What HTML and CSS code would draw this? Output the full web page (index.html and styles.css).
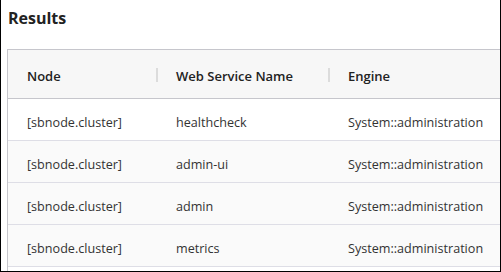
FILE: index.html
```html
<!DOCTYPE html>
<html lang="en">
<head>
    <meta charset="UTF-8">
    <meta name="viewport" content="width=device-width, initial-scale=1.0">
    <title>Results</title>
    <link rel="stylesheet" href="styles.css">
</head>
<body>
    <div class="panel">
        <h2 class="panel-title">Results</h2>

        <div class="results-table">
            <div class="row head">
                <div class="cell">Node</div>
                <div class="cell">Web Service Name</div>
                <div class="cell">Engine</div>
            </div>
            <div class="row first">
                <div class="cell">[sbnode.cluster]</div>
                <div class="cell">healthcheck</div>
                <div class="cell">System::administration</div>
            </div>
            <div class="row">
                <div class="cell">[sbnode.cluster]</div>
                <div class="cell">admin-ui</div>
                <div class="cell">System::administration</div>
            </div>
            <div class="row">
                <div class="cell">[sbnode.cluster]</div>
                <div class="cell">admin</div>
                <div class="cell">System::administration</div>
            </div>
            <div class="row">
                <div class="cell">[sbnode.cluster]</div>
                <div class="cell">metrics</div>
                <div class="cell">System::administration</div>
            </div>
        </div>
    </div>
</body>
</html>
```

FILE: styles.css
```css
html, body {
    margin: 0;
    padding: 0;
    background-color: #fff;
}
body {
    font-family: "Open Sans", "Noto Sans", sans-serif;
    color: #333;
}
.panel {
    box-sizing: border-box;
    width: 501px;
    height: 272px;
    border: 1px solid #000;
    border-top: none;
    overflow: hidden;
    display: flex;
    flex-direction: column;
}
.panel-title {
    margin: 7px 0 20px 7px;
    font-size: 16px;
    font-weight: 700;
    line-height: 22px;
    color: #222;
}
.results-table {
    flex: 1;
    margin-left: 6px;
    border-top: 1px solid #c6c6cc;
    border-left: 1px solid #c6c6cc;
}
.row {
    box-sizing: border-box;
    display: grid;
    grid-template-columns: 150px 172px 1fr;
    height: 42px;
    padding-top: 5px;
    align-items: center;
    border-bottom: 1px solid #dedee6;
    background-color: #fafafa;
    font-size: 12.6px;
}
.row.first {
    background-color: #fff;
}
.row.head {
    height: 49px;
    padding-top: 3px;
    background-color: #f7f7f7;
    border-bottom-color: #c6c6cc;
    font-size: 13px;
    font-weight: 600;
    color: #222;
}
.cell {
    position: relative;
    padding: 0 18px;
    white-space: nowrap;
}
.row .cell:first-child {
    padding-left: 19px;
}
.head .cell:not(:last-child)::after {
    content: "";
    position: absolute;
    right: 0;
    top: 50%;
    width: 2px;
    height: 14px;
    margin-top: -8px;
    background-color: #dcdcdc;
}
```
